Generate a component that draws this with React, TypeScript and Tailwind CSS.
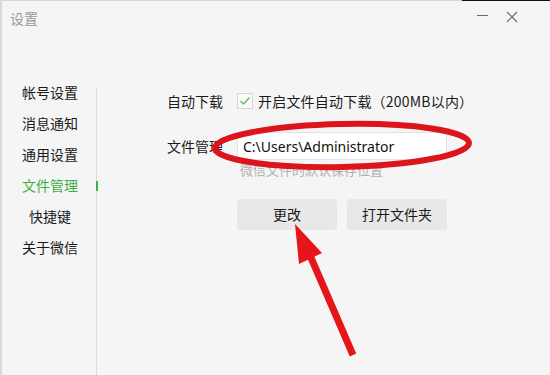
const cjk = { fontFamily: '"Noto Sans CJK SC", "Noto Sans", sans-serif' };
const latin = { fontFamily: '"Noto Sans", "Noto Sans CJK SC", sans-serif' };

const menu = ["帐号设置", "消息通知", "通用设置", "文件管理", "快捷键", "关于微信"];

export default function App() {
  return (
    <div
      className="relative flex h-[375px] w-[550px] flex-col overflow-hidden border-l-2 border-[#d9d9d9] bg-[#f5f5f5] text-[14px] text-[#1a1a1a]"
      style={cjk}
    >
      {/* top edge */}
      <div className="flex h-[1px] shrink-0">
        <div className="flex-1 bg-[#d6d6d6]" />
        <div className="w-[88px] bg-[#111]" />
      </div>

      {/* title bar */}
      <div className="flex h-[76px] shrink-0 items-start justify-between">
        <div className="pl-[8px] pt-[7px] text-[14px] text-[#9a9a9a]">设置</div>
        <div className="flex items-center gap-[18px] pr-[32px] pt-[4px] text-[#6b6b6b]">
          <div className="mt-[2px] h-[1px] w-[11px] bg-[#6b6b6b]" />
          <svg width="12" height="12" viewBox="0 0 12 12" className="mt-[6px]">
            <path d="M1 1L11 11M11 1L1 11" stroke="#6b6b6b" strokeWidth="1.2" />
          </svg>
        </div>
      </div>

      <div className="flex flex-1">
        {/* sidebar */}
        <div className="flex w-[94px] shrink-0 flex-col">
          {menu.map((m) => (
            <div
              key={m}
              className={
                "h-[31px] leading-[31px] " +
                (m === "文件管理" ? "pl-[20px] text-[#3fae46]" : m === "快捷键" ? "pl-[27px]" : "pl-[20px]")
              }
            >
              {m}
            </div>
          ))}
        </div>

        {/* divider */}
        <div className="relative mt-[10px] w-px bg-[#dcdcdc]">
          <div className="absolute left-0 top-[94px] h-[10px] w-[2px] bg-[#3fae46]" />
        </div>

        {/* content */}
        <div className="flex flex-col pl-[70px] pt-[10px]">
          <div className="flex h-[28px] items-center">
            <div className="w-[70px]">自动下载</div>
            <div className="flex h-[16px] w-[16px] items-center justify-center border border-[#d4d4d4] bg-[#fafafa]">
              <svg width="12" height="10" viewBox="0 0 12 10">
                <path d="M1.5 5L4.5 8L10.5 1.5" fill="none" stroke="#5fbf60" strokeWidth="1.3" />
              </svg>
            </div>
            <div className="ml-[5px] tracking-[0.2px]">开启文件自动下载（200MB以内）</div>
          </div>

          <div className="mt-[17px] flex h-[28px] items-center">
            <div className="w-[70px]">文件管理</div>
            <div
              className="flex h-[28px] w-[210px] items-center border border-[#e3e3e3] bg-white pl-[5px] text-[14px] text-[#111]"
              style={latin}
            >
              C:\Users\Administrator
            </div>
          </div>

          <div className="ml-[73px] mt-[1px] h-[18px] text-[13px] leading-[18px] text-[#b0b0b0]">
            微信文件的默认保存位置
          </div>

          <div className="ml-[70px] mt-[20px] flex gap-[10px]">
            <div className="flex h-[31px] w-[100px] items-center justify-center rounded-[3px] bg-[#e8e8e8]">
              更改
            </div>
            <div className="flex h-[31px] w-[100px] items-center justify-center rounded-[3px] bg-[#e8e8e8]">
              打开文件夹
            </div>
          </div>
        </div>
      </div>

      {/* red annotations */}
      <svg
        className="pointer-events-none absolute left-[-2px] top-0"
        width="550"
        height="375"
        viewBox="0 0 550 375"
      >
        <ellipse
          cx="342"
          cy="145.5"
          rx="127"
          ry="21.5"
          fill="none"
          stroke="#dc141b"
          strokeWidth="6"
          transform="rotate(-1.2 342 145.5)"
        />
        <line x1="353" y1="355" x2="309" y2="253" stroke="#e6141b" strokeWidth="7" />
        <polygon points="295,224 299,264 322,253" fill="#e6141b" />
      </svg>
    </div>
  );
}
